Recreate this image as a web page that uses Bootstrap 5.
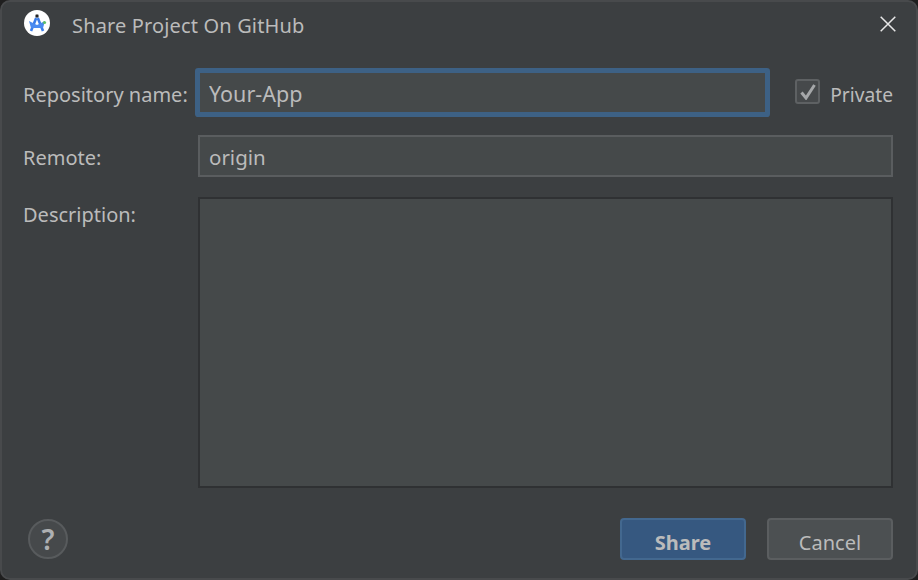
<!DOCTYPE html>
<html lang="en">
<head>
<meta charset="utf-8">
<title>Share Project On GitHub</title>
<link href="https://cdn.jsdelivr.net/npm/bootstrap@5.3.0/dist/css/bootstrap.min.css" rel="stylesheet">
<style>
html, body { height: 100%; margin: 0; background: #1f1f1f; }
body { font-family: "Noto Sans", "Open Sans", sans-serif; font-size: 20px; color: #bbbbbb; overflow: hidden; }
.dlg { width: 918px; height: 580px; background: #3c3f41; border: 2px solid #484a4c; border-radius: 10px; padding: 0 23px 18px 21px; display: flex; flex-direction: column; }
.dlg-head { height: 46px; flex: none; margin-bottom: 23px; }
.dlg-logo { flex: none; margin-left: 1px; margin-bottom: 4px; }
.dlg-title { margin-left: 22px; margin-top: 2px; font-size: 20px; line-height: 1; color: #bbbbbb; letter-spacing: .15px; }
.dlg-close { margin-left: auto; margin-right: -3px; margin-bottom: 3px; border: 0; background: none; padding: 0; line-height: 0; }
.lbl { width: 175px; flex: none; line-height: 1; margin: 0; white-space: nowrap; padding-top: 4px; }
.fld, .fld:focus { background: #45494a; color: #bbbbbb; border: 2px solid #5a5d5f; border-radius: 0; font-size: 21.5px; padding: 2px 9px 0; height: 42px; box-shadow: none; font-family: inherit; }
.fld-focus, .fld-focus:focus { border-color: #3d6185; box-shadow: 0 0 0 3px #3d6185; height: 43px; border-radius: 1px; }
.fld-remote, .fld-remote:focus { font-size: 20.5px; }
.row-a { height: 43px; }
.row-b { margin-top: 21px; height: 42px; }
.row-c { margin-top: 20px; flex: none; height: 291px; }
.priv { margin-left: 28px; flex: none; }
.priv-box { width: 25px; height: 25px; border: 2px solid #5e6163; border-radius: 3px; background: #46494b; flex: none; line-height: 0; display: flex; align-items: center; justify-content: center; margin-bottom: 2px; }
.priv-lbl { margin-left: 10px; line-height: 1; font-size: 19.2px; padding-top: 4px; }
.lbl-top { padding-top: 8px; }
.ta, .ta:focus { height: 291px; resize: none; border-color: #2f3133; }
.dlg-foot { margin-top: 30px; }
.help { width: 40px; height: 40px; border-radius: 50%; background: #46494b; border: 2px solid #585b5d; color: #aeb0b2; font-weight: 600; font-size: 28px; line-height: 1; padding: 0; margin-left: 5px; margin-bottom: 1px; }
.act { width: 126px; height: 42px; border-radius: 4px; font-size: 20px; color: #bbbbbb; padding: 8px 0 0; line-height: 1; }
.act-ok, .act-ok:hover { background: #365880; border: 2px solid #43688f; font-weight: 700; }
.act-no, .act-no:hover { background: #4c5052; border: 2px solid #5b5e60; color: #bbbbbb; margin-left: 21px; }
</style>
</head>
<body>
<div class="dlg">
  <div class="dlg-head d-flex align-items-center">
    <svg class="dlg-logo" width="26" height="26" viewBox="0 0 26 26" aria-hidden="true">
      <circle cx="13" cy="13" r="13" fill="#fff"/>
      <path d="M13 6 L7 21 M13 6 L19 21" stroke="#3a7ce8" stroke-width="2.6" fill="none"/>
      <path d="M5 11 L13 15 L21 11 L19 18 H7 Z" fill="#4a8af0"/>
      <circle cx="13" cy="6" r="2" fill="#222" stroke="#fff" stroke-width=".6"/>
      <circle cx="20.5" cy="12.5" r="1.6" fill="#5fbf6a"/>
    </svg>
    <span class="dlg-title">Share Project On GitHub</span>
    <button type="button" class="dlg-close" aria-label="Close">
      <svg width="16" height="16" viewBox="0 0 16 16"><path d="M.7.7 15.3 15.3M15.3.7.7 15.3" stroke="#e8e8e8" stroke-width="1.5" fill="none"/></svg>
    </button>
  </div>

  <div class="d-flex align-items-center row-a">
    <label class="lbl" for="f1">Repository name:</label>
    <input id="f1" class="form-control fld fld-focus" value="Your-App">
    <div class="priv d-flex align-items-center">
      <span class="priv-box">
        <svg width="16" height="16" viewBox="0 0 16 16"><path d="M1.5 8.5 6 14 14.5 1" stroke="#a5a7a9" stroke-width="3" fill="none"/></svg>
      </span>
      <span class="priv-lbl">Private</span>
    </div>
  </div>

  <div class="d-flex align-items-center row-b">
    <label class="lbl" for="f2">Remote:</label>
    <input id="f2" class="form-control fld fld-remote" value="origin">
  </div>

  <div class="d-flex row-c">
    <label class="lbl lbl-top" for="f3">Description:</label>
    <textarea id="f3" class="form-control fld ta"></textarea>
  </div>

  <div class="dlg-foot d-flex align-items-center">
    <button type="button" class="btn help d-flex align-items-center justify-content-center">?</button>
    <button type="button" class="btn act act-ok ms-auto">Share</button>
    <button type="button" class="btn act act-no">Cancel</button>
  </div>
</div>
</body>
</html>
